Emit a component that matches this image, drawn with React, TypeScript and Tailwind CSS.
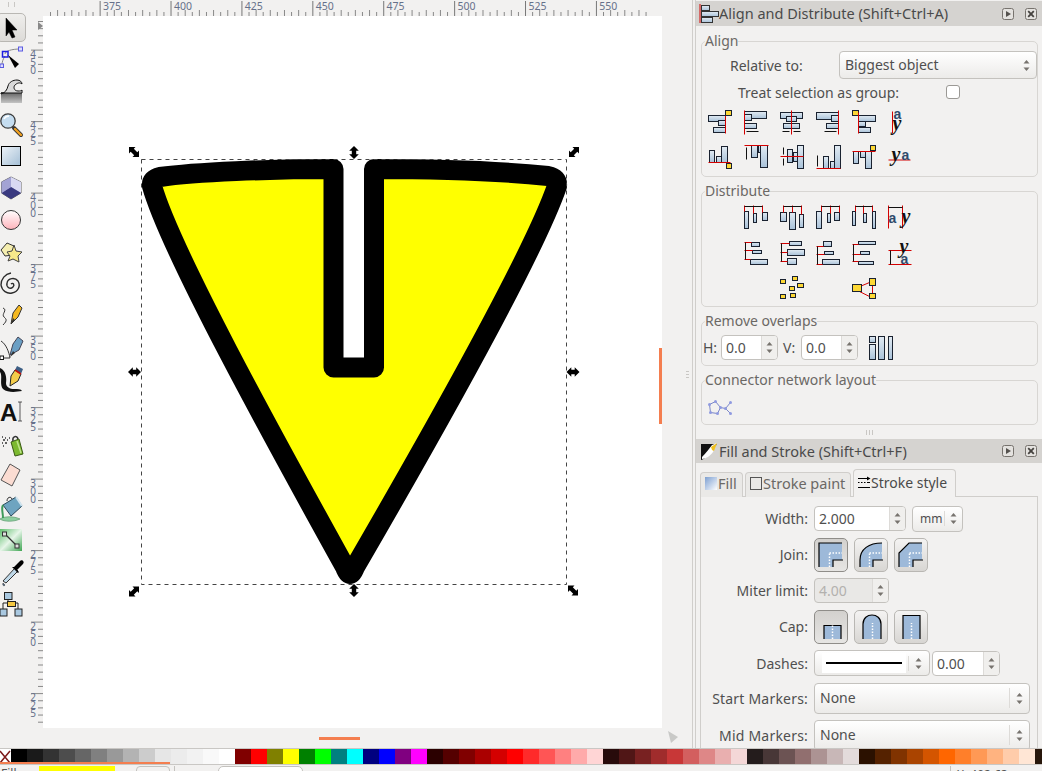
import type { ReactNode } from "react";

type Shape = [string, number, number, number, number];

const PALETTE = [
  "#000000", "#1a1a1a", "#333333", "#4d4d4d", "#666666", "#808080", "#999999", "#b3b3b3", "#cccccc", "#e6e6e6", "#ececec", "#f2f2f2", "#f9f9f9", "#ffffff",
  "#800000", "#ff0000", "#808000", "#ffff00", "#008000", "#00ff00", "#008080", "#00ffff", "#000080", "#0000ff", "#800080", "#ff00ff",
  "#2b0000", "#550000", "#800000", "#aa0000", "#d40000", "#ff0000", "#ff2a2a", "#ff5555", "#ff8080", "#ffaaaa", "#ffd5d5",
  "#280b0b", "#501616", "#782121", "#a02c2c", "#c83737", "#d35f5f", "#de8787", "#e9afaf", "#f4d7d7",
  "#241c1c", "#483737", "#6c5353", "#916f6f", "#ac9393", "#c8b7b7", "#e3dbdb",
  "#2b1100", "#552200", "#803300", "#aa4400", "#d45500", "#ff6600", "#ff7f2a", "#ff9955", "#ffb380", "#ffccaa", "#ffe6d5", "#28170b",
];

const ALIGN_ROW_1: Shape[][] = [
  [["b", 0, 5, 17, 6], ["b", 10, 10, 7, 5], ["b", 5, 17, 12, 5], ["r", 17, 2, 17, 23], ["y", 17, 0, 6, 5]],
  [["b", 0, 1, 22, 7], ["b", 0, 4, 7, 6], ["b", 0, 13, 12, 5], ["r", 0, 0, 0, 24], ["k", 2, 21, 14, 21]],
  [["b", 0, 2, 22, 6], ["b", 6, 6, 10, 5], ["b", 3, 13, 16, 5], ["r", 11, 0, 11, 24], ["k", 2, 21, 9, 21], ["k", 13, 21, 20, 21]],
  [["b", 0, 2, 22, 7], ["b", 15, 5, 7, 6], ["b", 10, 13, 12, 5], ["r", 22, 0, 22, 24], ["k", 8, 21, 20, 21]],
  [["y", 0, 0, 6, 5], ["b", 6, 5, 17, 6], ["b", 6, 11, 7, 5], ["b", 6, 17, 12, 5], ["r", 6, 2, 6, 23]],
];

const ALIGN_ROW_2: Shape[][] = [
  [["b", 1, 5, 5, 12], ["b", 8, 11, 6, 6], ["b", 13, 1, 6, 16], ["r", 0, 17, 22, 17], ["y", 18, 18, 5, 5]],
  [["b", 7, 0, 6, 12], ["b", 14, 0, 6, 7], ["b", 16, 0, 7, 22], ["r", 0, 0, 24, 0], ["k", 2, 2, 2, 14]],
  [["b", 7, 4, 5, 13], ["b", 13, 7, 6, 9], ["b", 17, 0, 6, 23], ["r", 0, 11, 23, 11], ["k", 3, 2, 3, 9], ["k", 3, 13, 3, 20]],
  [["b", 7, 11, 5, 12], ["b", 14, 16, 6, 7], ["b", 18, 0, 6, 23], ["r", 0, 23, 24, 23], ["k", 1, 10, 1, 21]],
  [["b", 1, 6, 5, 12], ["b", 8, 6, 6, 6], ["b", 13, 6, 6, 17], ["r", 0, 6, 23, 6], ["y", 18, 0, 5, 5]],
];

const DIST_ROW_1: Shape[][] = [
  [["b", 0, 6, 4, 17], ["b", 9, 8, 3, 9], ["b", 18, 7, 5, 8], ["r", 0, 0, 0, 6], ["r", 9, 0, 9, 8], ["r", 18, 0, 18, 7], ["k", 0, 1, 18, 1]],
  [["b", 0, 7, 6, 9], ["b", 9, 7, 6, 17], ["b", 19, 9, 4, 13], ["r", 3, 0, 3, 7], ["r", 12, 0, 12, 7], ["r", 21, 0, 21, 9], ["k", 3, 1, 21, 1]],
  [["b", 0, 6, 5, 17], ["b", 11, 8, 3, 9], ["b", 18, 7, 5, 8], ["r", 5, 0, 5, 6], ["r", 14, 0, 14, 8], ["r", 23, 0, 23, 7], ["k", 5, 1, 23, 1]],
  [["b", 0, 6, 3, 14], ["b", 11, 8, 3, 9], ["b", 20, 6, 3, 17], ["r", 3, 0, 3, 6], ["r", 11, 0, 11, 8], ["r", 20, 0, 20, 6], ["k", 3, 1, 20, 1]],
];

const DIST_ROW_2: Shape[][] = [
  [["b", 7, 1, 8, 4], ["b", 8, 9, 9, 3], ["b", 6, 18, 17, 5], ["r", 0, 1, 7, 1], ["r", 0, 9, 8, 9], ["r", 0, 18, 6, 18], ["k", 1, 1, 1, 18]],
  [["b", 9, 0, 12, 4], ["b", 7, 8, 17, 6], ["b", 7, 17, 9, 6], ["r", 0, 2, 9, 2], ["r", 0, 11, 7, 11], ["r", 0, 20, 7, 20], ["k", 1, 2, 1, 20]],
  [["b", 7, 0, 8, 5], ["b", 8, 10, 9, 3], ["b", 6, 18, 17, 5], ["r", 0, 5, 7, 5], ["r", 0, 13, 8, 13], ["r", 0, 23, 6, 23], ["k", 1, 5, 1, 23]],
  [["b", 6, 0, 17, 3], ["b", 8, 10, 9, 3], ["b", 6, 20, 15, 3], ["r", 0, 3, 6, 3], ["r", 0, 13, 8, 13], ["r", 0, 20, 6, 20], ["k", 1, 3, 1, 20]],
];

const SCATTER: Shape[] = [["y", 0, 3, 5, 4], ["y", 12, 0, 5, 4], ["y", 9, 10, 5, 4], ["y", 17, 7, 6, 4], ["y", 0, 18, 5, 4], ["y", 10, 17, 5, 4]];

function Mini({ shapes, children }: { shapes?: Shape[]; children?: ReactNode }) {
  return (
    <svg width="24" height="24" viewBox="-0.5 -0.5 24 24" className="block overflow-visible">
      {shapes?.map(([kind, a, b, c, d], i) => {
        if (kind === "r") return <line key={i} x1={a} y1={b} x2={c} y2={d} stroke="#d40000" />;
        if (kind === "k") return <line key={i} x1={a} y1={b} x2={c} y2={d} stroke="#111" />;
        return <rect key={i} x={a} y={b} width={c} height={d} fill={kind === "y" ? "#fdd835" : "url(#barFill)"} stroke="#1a2230" />;
      })}
      {children}
    </svg>
  );
}

function GlyphA({ x, y }: { x: number; y: number }) {
  return <text x={x} y={y} fontFamily="Liberation Sans, sans-serif" fontSize="14" fontWeight="700" fill="#2f4a6b">a</text>;
}

function GlyphY({ x, y }: { x: number; y: number }) {
  return <text x={x} y={y} fontFamily="Liberation Serif, serif" fontSize="20" fontWeight="700" fontStyle="italic" fill="#111">y</text>;
}

function Arrows() {
  return (
    <svg width="9" height="15" viewBox="0 0 9 15" className="block shrink-0">
      <path d="M4.5 2 L7.5 5.5 H1.5 Z" fill="#77736e" />
      <path d="M4.5 13 L7.5 9.5 H1.5 Z" fill="#77736e" />
    </svg>
  );
}

function Spin({ value, w, disabled }: { value: string; w: string; disabled?: boolean }) {
  return (
    <div className={`flex h-[25px] shrink-0 items-center overflow-hidden rounded-[4px] border border-[#c4c2be] ${w} ${disabled ? "bg-[#e9e8e6] text-[#b3b1ae]" : "bg-white"}`}>
      <span className="flex-1 pl-[4px]">{value}</span>
      <div className="flex h-full w-[16px] items-center justify-center border-l border-[#dddbd8] bg-[#f0efed]">
        <Arrows />
      </div>
    </div>
  );
}

function Select({ value, className, plain }: { value: string; className: string; plain?: boolean }) {
  return (
    <div className={`flex items-center rounded-[4px] border border-[#c4c2be] bg-gradient-to-b from-white to-[#ecebe9] ${className}`}>
      <span className="flex-1 pb-[1px] pl-[5px]">{value}</span>
      <div className={`flex h-[20px] w-[20px] items-center justify-center border-l ${plain ? "border-transparent" : "border-[#dddbd8]"}`}>
        <Arrows />
      </div>
    </div>
  );
}

function Frame({ title, className, children }: { title: string; className: string; children: ReactNode }) {
  return (
    <fieldset className={`mx-[4px] ml-[5px] rounded-[5px] border border-[#d8d6d3] ${className}`}>
      <legend className="ml-[3px] pb-[2px] text-[14px] leading-[17px] text-[#6b6865]">{title}</legend>
      {children}
    </fieldset>
  );
}

function TitleBar({ icon, title, className }: { icon: ReactNode; title: string; className: string }) {
  return (
    <div className={`flex items-center bg-[#d5d3d0] pl-[2px] text-[#4a4a4a] ${className}`}>
      <span className="flex w-[21px] justify-center">{icon}</span>
      <span className="flex-1 pt-[1px] text-[14.5px]">{title}</span>
      <svg width="12" height="12" viewBox="0 0 12 12" className="mr-[11px]">
        <rect x="0.5" y="0.5" width="11" height="11" rx="2" fill="#e4e2df" stroke="#77736e" />
        <path d="M4 3 L9 6 L4 9 Z" fill="#55524e" />
      </svg>
      <svg width="12" height="12" viewBox="0 0 12 12" className="mr-[5px]">
        <rect x="0.5" y="0.5" width="11" height="11" rx="2" fill="#e4e2df" stroke="#77736e" />
        <path d="M3.2 3.2 L8.8 8.8 M8.8 3.2 L3.2 8.8" stroke="#45423f" strokeWidth="1.8" />
      </svg>
    </div>
  );
}

function StyleButton({ pressed, children }: { pressed?: boolean; children: ReactNode }) {
  return (
    <div className={`h-[34px] w-[34px] rounded-[5px] border bg-gradient-to-b ${pressed ? "border-[#8f8d89] from-[#d3d1ce] to-[#e6e5e3]" : "border-[#b9b7b3] from-[#f4f3f2] to-[#d8d6d3]"}`}>
      <svg width="32" height="32" viewBox="0 0 32 32" className="block">{children}</svg>
    </div>
  );
}

function Dots() {
  return (
    <>
      <path d="M14.5 28 V14" stroke="#fff" strokeWidth="1.5" strokeDasharray="1.5 1.5" />
      <path d="M14.5 14 H27" stroke="#fff" strokeWidth="1.5" strokeDasharray="1.5 1.5" />
    </>
  );
}

function Row({ label, className, labelClass, children }: { label: string; className: string; labelClass?: string; children: ReactNode }) {
  return (
    <div className={`flex items-center ${className}`}>
      <span className={`w-[107px] shrink-0 text-right ${labelClass ?? ""}`}>{label}</span>
      <div className="ml-[6px] flex flex-1 items-center">{children}</div>
    </div>
  );
}

function Tool({ children }: { children: ReactNode }) {
  return (
    <svg width="25" height="32" viewBox="0 0 25 32" className="block">
      {children}
    </svg>
  );
}

function Tools() {
  return (
    <div className="relative flex h-full w-[25px] shrink-0 flex-col pt-[12px]">
      <div className="absolute left-[8px] top-[2px] h-[5px] w-[7px] border-x border-[#c9c7c4]" />
      <div className="absolute -left-[4px] top-[13px] h-[29px] w-[30px] rounded-[5px] border border-[#b9b7b3] bg-gradient-to-b from-[#efeeec] to-[#dddbd8]" />
      <div className="relative">
        {/* selector */}
        <Tool><path d="M6 6 L17 18 L12 18 L15 25 L12 26 L9 20 L6 24 Z" fill="#000" stroke="#000" strokeWidth="0.5" /></Tool>
        {/* node */}
        <Tool>
          <path d="M5 10 C5 7 12 5 20 5 M5 12 C3 15 2 18 2 21" fill="none" stroke="#888" />
          <rect x="2.5" y="7.5" width="5.5" height="5.5" fill="none" stroke="#1f1fe0" strokeWidth="1.5" />
          <rect x="18.5" y="3" width="4" height="4" fill="#dcdcff" stroke="#5a5ae0" />
          <rect x="0" y="20" width="3.5" height="3.5" fill="#dcdcff" stroke="#5a5ae0" />
          <path d="M8 11 L19 20 L15 24 Z" fill="#000" />
        </Tool>
        {/* tweak */}
        <Tool>
          <defs>
            <linearGradient id="tweakFill" x1="0" y1="0" x2="0" y2="1">
              <stop offset="0" stopColor="#5f5f5f" />
              <stop offset="1" stopColor="#c4c4c4" />
            </linearGradient>
          </defs>
          <rect x="1" y="16" width="21" height="11" fill="url(#tweakFill)" />
          <path d="M1 18 C5 17 7 14 8 10 C9 6 13 4 17 4 C20 4 22 6 22 8 C20 6 17 7 15 9 C13 11 14 15 18 15 C20 15 21 15 22 14 V17 H1 Z" fill="#d9d9d9" stroke="#111" strokeWidth="1" />
        </Tool>
        {/* zoom */}
        <Tool>
          <path d="M14 20 L21 27" stroke="#333" strokeWidth="4" strokeLinecap="round" />
          <path d="M15 21 L21 27" stroke="#f0a020" strokeWidth="2.4" strokeLinecap="round" />
          <circle cx="8" cy="13" r="7.2" fill="#c5ddf0" stroke="#3d3d3d" strokeWidth="1.3" />
          <path d="M4 11 C5 9 7 8 9 8" fill="none" stroke="#fff" strokeWidth="1.5" />
        </Tool>
        {/* rect */}
        <Tool>
          <defs>
            <linearGradient id="rectFill" x1="0" y1="0" x2="1" y2="1">
              <stop offset="0" stopColor="#eef3f8" />
              <stop offset="1" stopColor="#a4bfd6" />
            </linearGradient>
          </defs>
          <rect x="1.5" y="6.5" width="19" height="19" fill="url(#rectFill)" stroke="#000" />
        </Tool>
        {/* 3d box */}
        <Tool>
          <path d="M11 5 L21 10 V21 L11 27 L1.5 21 V10 Z" fill="#8f8fc8" stroke="#666" />
          <path d="M11 5 L21 10 V21 L11 15 Z" fill="#d9d9f2" />
          <path d="M11 15 L21 21 L11 27 L1.5 21 Z" fill="#3a3a80" />
          <path d="M1.5 10 L11 5 V15 L1.5 21 Z" fill="#a3a3d4" />
        </Tool>
        {/* ellipse */}
        <Tool>
          <defs>
            <linearGradient id="pinkFill" x1="0" y1="0" x2="0" y2="1">
              <stop offset="0" stopColor="#ffffff" />
              <stop offset="1" stopColor="#ffb3bb" />
            </linearGradient>
          </defs>
          <circle cx="11" cy="16" r="9.5" fill="url(#pinkFill)" stroke="#333" />
        </Tool>
        {/* star */}
        <Tool>
          <path d="M1 14 L7 7 L14 10 L13 19 L5 20 Z" fill="#f5eeb0" stroke="#333" />
          <path d="M14 9 L16 15 L22 16 L18 20 L19 26 L13 23 L8 25 L10 20 L7 16 L12 15 Z" fill="#f7e98a" stroke="#444" />
        </Tool>
        {/* spiral */}
        <Tool>
          <path d="M11 16 C13 14 15 17 13 19 C10 22 6 19 7 15 C8 10 15 9 18 13 C21 18 18 24 12 25 C7 26 2 23 1 17 C1 11 5 6 11 5" fill="none" stroke="#2b2b2b" strokeWidth="1.4" />
        </Tool>
        {/* pencil */}
        <Tool>
          <path d="M3 8 C8 10 1 14 4 17 C6 19 8 20 3 25" fill="none" stroke="#333" />
          <path d="M11 24 L13 13 L19 5 L22 8 L18 17 Z" fill="#f5b820" stroke="#333" />
          <path d="M11 24 L13 18 L15 20 Z" fill="#333" />
        </Tool>
        {/* pen */}
        <Tool>
          <path d="M1 9 C6 12 9 20 10 26" fill="none" stroke="#333" />
          <rect x="0" y="24" width="3.5" height="3.5" fill="#fff" stroke="#111" />
          <path d="M3 26 H10" stroke="#333" />
          <path d="M10 23 L13 12 L18 5 L23 9 L19 18 Z" fill="#6b9fc4" stroke="#445" />
          <path d="M10 25 L13 19 L15 21 Z" fill="#333" />
        </Tool>
        {/* calligraphy */}
        <Tool>
          <path d="M0 4 C5 6 7 12 6 19 C6 23 10 25 14 25 C18 25 21 25 22 27 C16 28 8 29 3 25 C-1 20 3 12 0 8 Z" fill="#111" />
          <path d="M10 22 L11 12 L15 6 L21 10 L18 17 Z" fill="#f3cc4a" stroke="#222" />
          <path d="M15 6 L17 2 L23 5 L21 10 Z" fill="#3d5f85" />
          <path d="M15 6 L21 10" stroke="#c01010" strokeWidth="1.6" />
        </Tool>
        {/* text */}
        <Tool>
          <text x="0" y="25" fontFamily="Liberation Sans, sans-serif" fontSize="24" fontWeight="700" fill="#111">A</text>
          <path d="M18 6 H22 M20 6 V25 M18 25 H22" stroke="#333" strokeWidth="0.8" fill="none" />
        </Tool>
        {/* spray */}
        <Tool>
          <path d="M2 9 h1 M5 10 h1 M3 12 h2 M7 12 h1 M2 15 h1 M5 15 h2 M9 10 h1 M3 18 h1" stroke="#333" strokeWidth="1.4" />
          <path d="M11 14 L19 11 L23 26 L15 28 Z" fill="#7cb92f" stroke="#3a5a15" />
          <path d="M13 13 C12 8 17 7 18 11" fill="none" stroke="#333" strokeWidth="1.5" />
          <path d="M17 13 L21 25" stroke="#bde38a" strokeWidth="1.5" />
        </Tool>
        {/* eraser */}
        <Tool>
          <path d="M10 4 L20 10 L12 26 L1 20 Z" fill="#fbdcd2" stroke="#555" />
        </Tool>
        {/* bucket */}
        <Tool>
          <path d="M0 27 C4 24 14 24 20 27 C14 30 4 30 0 27 Z" fill="#8ecfa0" stroke="#4f8f60" strokeWidth="0.6" />
          <path d="M3 13 L16 5 L22 14 L11 24 Z" fill="#6ea4c0" stroke="#2b4a5c" />
          <path d="M16 5 L22 14" stroke="#cfe3ee" strokeWidth="2" />
          <path d="M3 13 C1 17 3 20 3 26" fill="none" stroke="#3f9a5a" strokeWidth="2" />
          <path d="M7 9 C7 5 11 4 12 7" fill="none" stroke="#333" />
        </Tool>
        {/* gradient */}
        <Tool>
          <defs>
            <linearGradient id="gradFill" x1="0" y1="0" x2="1" y2="1">
              <stop offset="0" stopColor="#5fbf6d" />
              <stop offset="0.5" stopColor="#e6f5e8" />
              <stop offset="1" stopColor="#3ea552" />
            </linearGradient>
          </defs>
          <rect x="0" y="5" width="22" height="22" fill="url(#gradFill)" />
          <path d="M5 10 L17 22" stroke="#333" strokeWidth="1.3" />
          <rect x="2.5" y="8" width="4" height="4" fill="#ddd" stroke="#333" />
          <rect x="15" y="20" width="4" height="4" fill="#ddd" stroke="#333" />
        </Tool>
        {/* dropper */}
        <Tool>
          <path d="M3 25 L15 12 L18 15 L6 27 Z" fill="#bfd8e8" stroke="#333" />
          <path d="M14 11 L20 5 C22 3 25 6 23 8 L17 14 L19 16 L18 17 L12 11 Z" fill="#000" />
          <path d="M3 27 C2 29 4 31 5 29 Z" fill="#4d6a85" stroke="#333" strokeWidth="0.5" />
        </Tool>
        {/* connector */}
        <Tool>
          <path d="M8 12 V15 H3 V21 M18 15 V21 M8 15 H18" fill="none" stroke="#222" />
          <rect x="4.5" y="4.5" width="7.5" height="7" fill="#a9c8e0" stroke="#222" />
          <rect x="7.5" y="13.5" width="8" height="5" fill="#f5c842" stroke="#222" />
          <rect x="0" y="21" width="7" height="7" fill="#a9c8e0" stroke="#222" />
          <rect x="15" y="21" width="7" height="7" fill="#a9c8e0" stroke="#222" />
        </Tool>
      </div>
    </div>
  );
}

function TopRuler() {
  const ticks = Array.from({ length: 85 }, (_, i) => 50.5 + i * 7.09);
  const labels = ["375", "400", "425", "450", "475", "500", "525", "550"];
  return (
    <svg width="637" height="16" viewBox="25 0 637 16" className="block shrink-0">
      {ticks.map((x, i) => {
        const major = (i - 7) % 10 === 0;
        return <line key={i} x1={x} x2={x} y1={major ? 1 : i % 2 === 1 ? 10 : 12} y2={16} stroke={major ? "#777" : "#888"} />;
      })}
      {labels.map((label, i) => (
        <text key={label} x={103 + i * 70.9} y={9.5} fontFamily="Noto Sans, sans-serif" fontSize="10.5" fill="#66708a">{label}</text>
      ))}
    </svg>
  );
}

function SideRuler() {
  const ticks = Array.from({ length: 102 }, (_, i) => 21.5 + i * 7.15);
  const labels = ["450", "425", "400", "375", "350", "325", "300", "275", "250", "225"];
  return (
    <svg width="18" height="712" viewBox="25 16 18 712" className="block shrink-0">
      {ticks.map((y, i) => {
        const major = (i - 4) % 10 === 0;
        return <line key={i} x1={major ? 31 : 38} x2={43} y1={y} y2={y} stroke="#888" />;
      })}
      <path d="M38 22 L43 26 L38 30 Z" fill="#888" />
      {labels.map((label, i) => (
        <text key={label} x={33} y={57.5 + i * 71.5} fontFamily="Noto Sans, sans-serif" fontSize="10" fill="#66708a" textAnchor="middle">
          {label.split("").map((digit, d) => (
            <tspan key={d} x={33} dy={d === 0 ? 0 : 8}>{digit}</tspan>
          ))}
        </text>
      ))}
    </svg>
  );
}

function Canvas() {
  const diag = "M0 0 h6.5 l-1.7 1.7 l3.5 3.5 l1.7 -1.7 v6.5 h-6.5 l1.7 -1.7 l-3.5 -3.5 l-1.7 1.7 z";
  const vert = "M0 -6.5 l4.8 4.8 h-2.6 v3.4 h2.6 l-4.8 4.8 l-4.8 -4.8 h2.6 v-3.4 h-2.6 z";
  return (
    <svg width="619" height="712" viewBox="43 16 619 712" className="block flex-1 bg-white">
      <path
        d="M152 186 Q151 179 160 177 C195 172 270 169 333.5 169 V367.5 H374 V169 C440 169 510 172 548 176 Q558 178 557 186 C535 250 442 417 355 567 Q350 581 345 567 C273 437 170 250 152 186 Z"
        fill="#ffff00"
        stroke="#000"
        strokeWidth="20"
        strokeLinejoin="round"
      />
      <rect x="141.5" y="159.5" width="425" height="425" fill="none" stroke="#444" strokeDasharray="4 4" />
      <path d={diag} transform="translate(129 147)" fill="#000" />
      <path d={diag} transform="translate(579 147) scale(-1 1)" fill="#000" />
      <path d={diag} transform="translate(129 596.5) scale(1 -1)" fill="#000" />
      <path d={diag} transform="translate(568 585.5)" fill="#000" />
      <path d={vert} transform="translate(354 152.5)" fill="#000" />
      <path d={vert} transform="translate(354 590.5)" fill="#000" />
      <path d={vert} transform="translate(134.5 372) rotate(90)" fill="#000" />
      <path d={vert} transform="translate(573 372) rotate(90)" fill="#000" />
    </svg>
  );
}

function AlignPanel() {
  return (
    <>
      <TitleBar
        className="mt-[1px] h-[25px]"
        title="Align and Distribute (Shift+Ctrl+A)"
        icon={
          <svg width="20" height="20" viewBox="0 0 20 20">
            <path d="M1 0 V19" stroke="#d40000" />
            <rect x="2.5" y="1.5" width="8" height="5" fill="url(#barFill)" stroke="#333" />
            <rect x="2.5" y="7.5" width="17" height="5" fill="url(#barFill)" stroke="#333" />
            <rect x="2.5" y="13.5" width="11" height="5" fill="url(#barFill)" stroke="#333" />
          </svg>
        }
      />
      <Frame title="Align" className="mt-[6px] h-[145px]">
        <div className="flex h-[28px] items-center pl-[28px]">
          <span className="w-[109px] shrink-0">Relative to:</span>
          <Select value="Biggest object" className="h-[28px] flex-1" plain />
        </div>
        <div className="mt-[5px] flex h-[16px] items-center pl-[36px]">
          <span className="w-[208px] shrink-0">Treat selection as group:</span>
          <div className="h-[14px] w-[14px] rounded-[3px] border border-[#9b9995] bg-white" />
        </div>
        <div className="mt-[10px] grid grid-cols-[repeat(6,36px)] gap-y-[11px] pl-[6px]">
          {ALIGN_ROW_1.map((shapes, i) => <Mini key={i} shapes={shapes} />)}
          <Mini shapes={[["r", 4, 1, 4, 23]]}>
            <GlyphA x={5} y={8} />
            <GlyphY x={4} y={19} />
          </Mini>
          {ALIGN_ROW_2.map((shapes, i) => <Mini key={i} shapes={shapes} />)}
          <Mini shapes={[["r", 0, 14.5, 22, 14.5]]}>
            <GlyphY x={3} y={15} />
            <GlyphA x={13} y={14} />
          </Mini>
        </div>
      </Frame>
      <Frame title="Distribute" className="mt-[5px] h-[125px]">
        <div className="mt-[4px] grid grid-cols-[repeat(5,36px)] gap-y-[11.5px] pl-[42px]">
          {DIST_ROW_1.map((shapes, i) => <Mini key={i} shapes={shapes} />)}
          <Mini shapes={[["r", 0, 0, 0, 23], ["r", 14, 0, 14, 23], ["k", 0, 2, 14, 2]]}>
            <GlyphA x={0} y={17} />
            <GlyphY x={13} y={17} />
          </Mini>
          {DIST_ROW_2.map((shapes, i) => <Mini key={i} shapes={shapes} />)}
          <Mini shapes={[["r", 0, 9, 23, 9], ["r", 0, 23, 23, 23], ["k", 2, 9, 2, 23]]}>
            <GlyphY x={11} y={11} />
            <GlyphA x={12} y={22} />
          </Mini>
          <span />
          <Mini shapes={SCATTER} />
          <span />
          <Mini shapes={[["r", 5, 11, 17, 6], ["r", 5, 14, 17, 20], ["r", 20, 6, 20, 18], ["y", 0, 8, 9, 7], ["y", 17, 2, 6, 7], ["y", 17, 17, 6, 5]]} />
        </div>
      </Frame>
      <Frame title="Remove overlaps" className="mt-[5px] h-[54px]">
        <div className="mt-[4px] flex items-center pl-[1px]">
          <span className="w-[18px]">H:</span>
          <Spin value="0.0" w="w-[57px]" />
          <span className="ml-[5px] w-[18px]">V:</span>
          <Spin value="0.0" w="w-[57px]" />
          <div className="ml-[11px]">
            <Mini shapes={[["b", 0, 0, 6, 6], ["b", 0, 8, 6, 15], ["b", 9, 0, 6, 23], ["b", 19, 0, 4, 23]]} />
          </div>
        </div>
      </Frame>
      <Frame title="Connector network layout" className="mt-[5px] h-[54px]">
        <div className="mt-[8px] pl-[6px]">
          <Mini>
            <path d="M1 6 L7 3 L12 9 L9 15 L2 14 Z M12 9 L17 10 L22 4 M17 10 L22 15" fill="none" stroke="#7a86c8" />
            <g fill="#8f9ae0">
              <circle cx="1" cy="6" r="1.5" /><circle cx="7" cy="3" r="1.5" /><circle cx="12" cy="9" r="1.5" />
              <circle cx="9" cy="15" r="1.5" /><circle cx="2" cy="14" r="1.5" /><circle cx="17" cy="10" r="1.5" />
              <circle cx="22" cy="4" r="1.5" /><circle cx="22" cy="15" r="1.5" />
            </g>
          </Mini>
        </div>
      </Frame>
    </>
  );
}

function StrokePanel() {
  return (
    <>
      <TitleBar
        className="h-[24px]"
        title="Fill and Stroke (Shift+Ctrl+F)"
        icon={
          <svg width="18" height="19" viewBox="0 0 18 19">
            <path d="M1 2 H17 L12 9 C9 13 5 17 1 18 Z" fill="#111" />
            <path d="M2 15 C6 11 9 7 12 3 L17 1 L13 10 C10 14 6 17 2 17 Z" fill="#fff" />
            <path d="M11 5 L17 1 L14 9 L12 8 Z" fill="#f0c020" />
          </svg>
        }
      />
      <div className="relative z-10 mt-[6px] -mb-px flex h-[28px] items-end gap-[2px] pl-[4px]">
        <div className="flex h-[25px] w-[43px] items-center rounded-t-[4px] border border-b-0 border-[#d0cecb] bg-[#eae9e7] pb-[3px] pl-[4px] text-[14.5px] text-[#6b6865]">
          <span className="mr-[1px] h-[13px] w-[12px] shrink-0 bg-gradient-to-br from-[#7d9fd0] to-white" />
          <span>Fill</span>
        </div>
        <div className="flex h-[25px] w-[106px] items-center rounded-t-[4px] border border-b-0 border-[#d0cecb] bg-[#eae9e7] pb-[3px] pl-[4px] text-[14.5px] text-[#6b6865]">
          <span className="mr-[1px] h-[13px] w-[12px] shrink-0 border border-[#555]" />
          <span>Stroke paint</span>
        </div>
        <div className="flex h-[28px] w-[103px] items-center rounded-t-[4px] border border-b-0 border-[#d0cecb] bg-[#f2f1f0] pb-[2px] pl-[4px] text-[#4a4a4a]">
          <svg width="13" height="13" viewBox="0 0 13 13" className="shrink-0">
            <path d="M0 2.5 H10 M0 6.5 H1.5 M3 6.5 H4.5 M6 6.5 H7.5 M9 6.5 H12 M0 11.5 H12" stroke="#000" strokeWidth="1.1" />
            <path d="M9 0.5 L12.5 2.5 L9 4.5 Z" fill="#000" />
          </svg>
          <span>Stroke style</span>
        </div>
      </div>
      <div className="ml-[4px] mr-[4px] flex flex-1 flex-col gap-[7px] overflow-hidden border border-b-0 border-[#d0cecb] pt-[9px]">
        <Row label="Width:" className="h-[25px] shrink-0">
          <Spin value="2.000" w="w-[92px]" />
          <div className="ml-[6px] flex h-[26px] w-[51px] items-center rounded-[4px] border border-[#c4c2be] bg-gradient-to-b from-white to-[#ecebe9] text-[12px]">
            <span className="w-[31px] pl-[7px]">mm</span>
            <div className="flex h-[15px] items-center border-l border-[#dddbd8] pl-[4px]"><Arrows /></div>
          </div>
        </Row>
        <Row label="Join:" className="h-[33px] shrink-0">
          <div className="flex gap-[6px]">
            <StyleButton pressed>
              <path d="M4 4 H27 V21 H18 V28 H4 Z" fill="#9db9d9" />
              <path d="M4 28 V4 H27 M28 21 H18 V28" fill="none" stroke="#000" strokeWidth="1.2" />
              <Dots />
            </StyleButton>
            <StyleButton>
              <path d="M5 28 V21 C5 10 14 4 27 4 V21 H18 V28 Z" fill="#9db9d9" />
              <path d="M5 28 V21 C5 10 14 4 27 4 M28 21 H18 V28" fill="none" stroke="#000" strokeWidth="1.2" />
              <Dots />
            </StyleButton>
            <StyleButton>
              <path d="M4 28 V14 L14 4 H27 V21 H18 V28 Z" fill="#9db9d9" />
              <path d="M4 28 V14 L14 4 H27 M28 21 H18 V28" fill="none" stroke="#000" strokeWidth="1.2" />
              <Dots />
            </StyleButton>
          </div>
        </Row>
        <Row label="Miter limit:" className="h-[25px] shrink-0">
          <Spin value="4.00" w="w-[75px]" disabled />
        </Row>
        <Row label="Cap:" className="h-[33px] shrink-0">
          <div className="flex gap-[6px]">
            <StyleButton pressed>
              <path d="M9 14.5 H26 V28 H9 Z" fill="#9db9d9" />
              <path d="M9 28 V14.5 H26 V28" fill="none" stroke="#000" strokeWidth="1.2" />
              <path d="M17.5 28 V14" stroke="#fff" strokeWidth="1.5" strokeDasharray="1.5 1.5" />
            </StyleButton>
            <StyleButton>
              <path d="M8 28 V13 C8 1 26 1 26 13 V28 Z" fill="#9db9d9" />
              <path d="M8 28 V13 C8 1 26 1 26 13 V28" fill="none" stroke="#000" strokeWidth="1.2" />
              <path d="M17.5 28 V12" stroke="#fff" strokeWidth="1.5" strokeDasharray="1.5 1.5" />
            </StyleButton>
            <StyleButton>
              <path d="M8 4.5 H25 V28 H8 Z" fill="#9db9d9" />
              <path d="M8 28 V4.5 H25 V28" fill="none" stroke="#000" strokeWidth="1.2" />
              <path d="M16.5 28 V12" stroke="#fff" strokeWidth="1.5" strokeDasharray="1.5 1.5" />
            </StyleButton>
          </div>
        </Row>
        <Row label="Dashes:" className="h-[26px] shrink-0">
          <div className="flex h-[26px] w-[116px] items-center rounded-[4px] border border-[#c4c2be] bg-gradient-to-b from-white to-[#ecebe9]">
            <div className="ml-[7px] flex h-[20px] w-[84px] items-center justify-center bg-white">
              <div className="h-[2px] w-[76px] bg-black" />
            </div>
            <div className="ml-[2px] flex h-[15px] items-center border-l border-[#dddbd8] pl-[5px]"><Arrows /></div>
          </div>
          <div className="ml-[2px]"><Spin value="0.00" w="w-[68px]" /></div>
        </Row>
        <Row label="Start Markers:" labelClass="tracking-[0.2px]" className="h-[30px] shrink-0">
          <Select value="None" className="h-[31px] w-[216px]" />
        </Row>
        <Row label="Mid Markers:" labelClass="tracking-[0.2px]" className="h-[30px] shrink-0">
          <Select value="None" className="h-[31px] w-[216px]" />
        </Row>
      </div>
    </>
  );
}

export default function App() {
  return (
    <div className="flex h-[771px] w-[1042px] flex-col overflow-hidden bg-[#f2f1f0] font-['Noto_Sans',sans-serif] text-[14px] text-[#4f4f4f]">
      <svg width="0" height="0" className="block">
        <defs>
          <linearGradient id="barFill" x1="0" y1="0" x2="0" y2="1">
            <stop offset="0" stopColor="#e2ebf3" />
            <stop offset="1" stopColor="#a9c2d9" />
          </linearGradient>
        </defs>
      </svg>
      <div className="flex h-[748px] shrink-0">
        <Tools />
        <div className="relative flex w-[637px] shrink-0 flex-col">
          <TopRuler />
          <div className="flex h-[712px] shrink-0">
            <SideRuler />
            <Canvas />
          </div>
          <div className="flex h-[20px] items-center pl-[294px]">
            <div className="h-[3px] w-[41px] bg-[#f47e4f]" />
          </div>
          {/* scroll thumb over the canvas edge */}
          <div className="absolute right-0 top-[348px] h-[76px] w-[3px] bg-[#f47e4f]" />
        </div>
        <div className="relative flex w-[31px] shrink-0 items-center justify-end border-r border-[#d0cecb] pr-[3px]">
          <div className="flex flex-col gap-[2px]">
            <span className="h-[1px] w-[3px] bg-[#c9c7c4]" />
            <span className="h-[1px] w-[3px] bg-[#c9c7c4]" />
            <span className="h-[1px] w-[3px] bg-[#c9c7c4]" />
          </div>
          <svg width="14" height="14" viewBox="0 0 14 14" className="absolute bottom-[4px] left-[4px]">
            <path d="M2 1 L12 7 L5 13 Z" fill="#c9c9c7" />
          </svg>
        </div>
        <div className="flex w-[349px] shrink-0 flex-col pl-[2px]">
          <div className="flex h-full flex-col border-l border-[#d0cecb]">
            <AlignPanel />
            <div className="flex h-[14px] shrink-0 items-center justify-center gap-[2px]">
              <span className="h-[5px] w-[1px] bg-[#c9c7c4]" />
              <span className="h-[5px] w-[1px] bg-[#c9c7c4]" />
              <span className="h-[5px] w-[1px] bg-[#c9c7c4]" />
            </div>
            <StrokePanel />
          </div>
        </div>
      </div>
      <div className="relative flex h-[17px] shrink-0 overflow-hidden border-y border-[#c9c7c4]">
        <svg width="11" height="15" viewBox="0 0 11 15" className="block shrink-0 bg-white">
          <path d="M0 2 L10 14 M10 2 L0 14" stroke="#7d1a1a" strokeWidth="1.5" />
        </svg>
        {PALETTE.map((color, i) => (
          <span key={i} className="h-full w-[16px] shrink-0" style={{ backgroundColor: color }} />
        ))}
        <div className="absolute bottom-0 left-0 h-[2px] w-[170px] bg-[#f47e4f]" />
      </div>
      <div className="flex flex-1 overflow-hidden pt-[1px] text-[12px] leading-none">
        <span className="w-[39px] shrink-0 pl-[1px] pt-[2px] text-[#555]">Fill:</span>
        <span className="h-[5px] w-[76px] shrink-0 bg-[#ffff00]" />
        <span className="ml-[21px] h-[8px] w-[34px] shrink-0 rounded-t-[4px] border border-[#c4c2be]" />
        <span className="ml-[4px] h-[8px] w-[1px] shrink-0 bg-[#c4c2be]" />
        <span className="ml-[43px] h-[8px] w-[85px] shrink-0 rounded-t-[5px] border border-[#c4c2be] bg-white" />
        <span className="ml-[647px] h-[8px] w-[1px] shrink-0 bg-[#c4c2be]" />
        <span className="ml-[6px] pt-[3px] text-[#555]">X: 402.63</span>
      </div>
    </div>
  );
}
